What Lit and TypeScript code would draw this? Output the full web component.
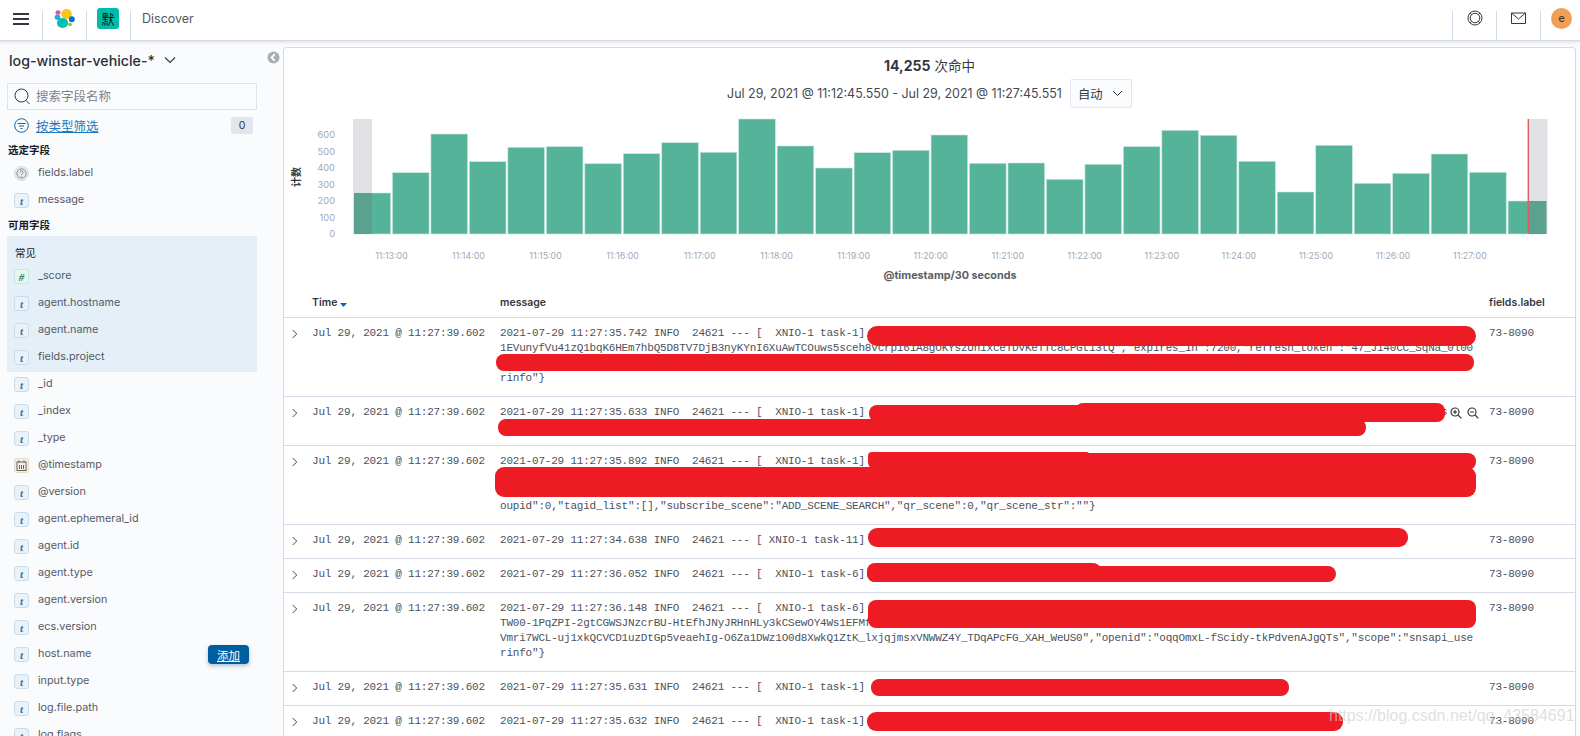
import { LitElement, html, css, svg } from "lit";
import { customElement } from "lit/decorators.js";

const BAR_TOPS = [193,172.7,134,161.7,147.3,146.7,163.7,153.7,142.7,152.3,119,146,168,152.7,150.3,135,163.3,163,179.3,164.3,146.7,130.3,135.3,161.3,192,145.3,183.3,173.3,154,172.3,201];
const YTICKS = [0,100,200,300,400,500,600];
const XLABELS = ["11:13:00","11:14:00","11:15:00","11:16:00","11:17:00","11:18:00","11:19:00","11:20:00","11:21:00","11:22:00","11:23:00","11:24:00","11:25:00","11:26:00","11:27:00"];

const POPULAR: [string,string][] = [["num","_score"],["t","agent.hostname"],["t","agent.name"],["t","fields.project"]];
const AVAILABLE: [string,string][] = [["t","_id"],["t","_index"],["t","_type"],["date","@timestamp"],["t","@version"],["t","agent.ephemeral_id"],["t","agent.id"],["t","agent.type"],["t","agent.version"],["t","ecs.version"],["t","host.name"],["t","input.type"],["t","log.file.path"],["t","log.flags"]];

const ROWS: string[][] = [
  ["2021-07-29 11:27:35.742 INFO  24621 --- [  XNIO-1 task-1]",
   '1EVunyfVu41zQ1bqK6HEm7hbQ5D8TV7DjB3nyKYnI6XuAwTCOuws5sceh8vcrp161A8gOKYszUn1xceTDvKeTTc8CPGt13tQ","expires_in":7200,"refresh_token":"47_J140CC_SqNa_0l00',
   "", 'rinfo"}'],
  ["2021-07-29 11:27:35.633 INFO  24621 --- [  XNIO-1 task-1]" + " ".repeat(90) + "s", ""],
  ["2021-07-29 11:27:35.892 INFO  24621 --- [  XNIO-1 task-1]", "", "",
   'oupid":0,"tagid_list":[],"subscribe_scene":"ADD_SCENE_SEARCH","qr_scene":0,"qr_scene_str":""}'],
  ["2021-07-29 11:27:34.638 INFO  24621 --- [ XNIO-1 task-11]"],
  ["2021-07-29 11:27:36.052 INFO  24621 --- [  XNIO-1 task-6]"],
  ["2021-07-29 11:27:36.148 INFO  24621 --- [  XNIO-1 task-6]",
   "TW00-1PqZPI-2gtCGWSJNzcrBU-HtEfhJNyJRHnHLy3kCSewOY4Ws1EFMf",
   'Vmri7WCL-uj1xkQCVCD1uzDtGp5veaehIg-O6Za1DWz1O0d8XwkQ1ZtK_lxjqjmsxVNWWZ4Y_TDqAPcFG_XAH_WeUS0","openid":"oqqOmxL-fScidy-tkPdvenAJgQTs","scope":"snsapi_use',
   'rinfo"}'],
  ["2021-07-29 11:27:35.631 INFO  24621 --- [  XNIO-1 task-1]"],
  ["2021-07-29 11:27:35.632 INFO  24621 --- [  XNIO-1 task-1]"],
];

// Redaction strokes painted over the log table: left, top, right, bottom, radius
const BLOBS: number[][] = [
  [867,326,1476,346,10],[496,354,1474,371,8],
  [869,405,1445,422,8],[1075,403,1445,420,8],[498,419,1366,436,8],
  [868,453,1476,470,8],[868,452,1090,462,4],[495,467,1476,497,9],
  [868,528,1408,547,9],
  [867,566,1336,582,8],[867,563,1101,582,8],
  [868,600,1476,628,8],
  [871,679,1289,696,8],
  [867,712,1343,731,9],
];

@customElement("app-root")
export class AppRoot extends LitElement {
  static styles = css`
    :host { display: block; width: 1580px; height: 736px; overflow: hidden; position: relative; background: #fafbfd;
      font-family: Inter, "Noto Sans CJK SC", sans-serif; color: #343741; }
    * { box-sizing: border-box; }
    .header { height: 41px; background: #fff; border-bottom: 1px solid #d3dae6; box-shadow: 0 1px 3px rgba(152,162,179,.35);
      display: flex; position: relative; z-index: 2; }
    .cell { height: 40px; display: flex; align-items: center; justify-content: center; position: relative; }
    .cell.sep::after { content: ""; position: absolute; right: 0; top: 11px; bottom: 0; width: 1px; background: #d3dae6; }
    .c1 { width: 43px; } .c2 { width: 44px; } .c3 { width: 44px; }
    .c1 svg { margin-right: 1px; margin-top: -3px; }
    .c2 svg { margin-top: -3px; }
    .badge { width: 22px; height: 21px; border-radius: 3px; background: #00bbaa; color: #111; font-size: 13px;
      display: flex; align-items: center; justify-content: center; margin-top: -4px; margin-left: -2px; }
    .crumb { margin-left: 11px; font-size: 12.5px; color: #54575f; line-height: 37px; flex: 1; }
    .rsep { width: 1px; height: 29px; margin-top: 11px; background: #d3dae6; }
    .r { width: 43px; height: 40px; display: flex; align-items: center; justify-content: center; padding-bottom: 4px; }
    .r.av { width: 39px; padding-left: 2px; }
    .avatar { width: 21px; height: 21px; border-radius: 50%; background: #f19f58; font-size: 10.5px; display: flex; align-items: center; justify-content: center; color: #222; }

    .main { display: flex; height: 695px; }
    .side { width: 283px; flex: none; padding: 0 26px 0 7px; position: relative; overflow: hidden; }
    .collapse { position: absolute; left: 267px; top: 10px; }
    .index { height: 40px; display: flex; align-items: center; margin-left: 2px; padding-bottom: 2px; font-size: 14.2px; font-weight: 500; color: #2c2f38; gap: 9px; }
    .search { height: 27px; margin-top: 2px; border: 1px solid #dfe4ec; background: #fbfcfd; display: flex; align-items: center;
      padding-left: 6px; gap: 5px; font-size: 12.5px; line-height: 23px; color: #7e838d; }
    .filter { height: 17px; margin-top: 7px; display: flex; align-items: center; padding-left: 7px; padding-right: 4px; }
    .filter .lbl { margin-left: 7px; font-size: 12.5px; color: #1a78bb; text-decoration: underline; flex: 1; }
    .count { width: 22px; height: 17px; background: #e0e5ee; border-radius: 3px; font-size: 10.5px; display: flex; align-items: center; justify-content: center; }
    .title { height: 16px; line-height: 16px; font-size: 10.5px; font-weight: 700; color: #1a1c21; margin-left: 1px; }
    .t1 { margin-top: 9px; }
    .t2 { margin-top: 5px; }
    .pop { margin-top: 2px; background: #e4eff8; padding-top: 10px; padding-bottom: 2px; margin-bottom: -2px; }
    .pop .title { margin: 0 0 0 8px; font-weight: 400; color: #1a1c21; }
    .f { height: 27px; display: flex; align-items: center; padding-left: 7px; font-size: 10.8px; color: #555a66; position: relative; }
    .ico { width: 15px; height: 15px; border-radius: 3px; display: flex; align-items: center; justify-content: center; margin-right: 9px; flex: none; margin-top: 2px;
      font-family: "Liberation Serif", serif; font-style: italic; font-weight: 700; font-size: 11px; }
    .ico.t { background: #eaf2f9; border: 1px solid #c9dcec; color: #3f6f97; }
    .ico.num { background: #e6f5f0; border: 1px solid #c9e8dd; color: #2f7d66; }
    .ico.date { background: #f3f0e9; border: 1px solid #e3dccd; }
    .ico.q { background: #e9ebef; border: 1px solid #d3d7dd; border-radius: 50%; }
    .add { position: absolute; left: 201px; top: 5px; width: 41px; height: 19px; border-radius: 4px; background: #005ea0; color: #fff;
      font-size: 11.5px; text-decoration: underline; display: flex; align-items: center; justify-content: center; box-shadow: 0 2px 4px rgba(0,60,110,.3); }

    .panel { width: 1293px; flex: none; margin-top: 6px; background: #fff; border: 1px solid #d3dae6; border-radius: 4px 4px 0 0; border-bottom: 0; overflow: hidden; }
    .hits { margin-top: 10px; height: 16px; line-height: 16px; text-align: center; font-size: 13.5px; color: #343741; }
    .hits b { font-weight: 700; font-size: 14px; margin-right: 4px; }
    .range { margin-top: 5px; height: 29px; display: flex; align-items: center; justify-content: center; gap: 8px; font-size: 12.45px; color: #454952; }
    .select { width: 62px; height: 29px; border: 1px solid #e3e8f0; background: #fbfcfd; border-radius: 2px; display: flex; align-items: center; padding-left: 7px; gap: 9px; font-size: 12.3px; color: #343741; }
    .chart { display: block; width: 1291px; height: 180px; font-family: Inter, "Noto Sans CJK SC", sans-serif; }
    .thead { height: 30px; display: grid; grid-template-columns: 28px 188px 989px 1fr; align-items: center; border-bottom: 1px solid #d3dae6; font-size: 10.5px; font-weight: 600; color: #343741; padding-bottom: 1px; }
    .sort { display: inline-block; margin-left: 3px; vertical-align: -1px; }
    .row { display: grid; grid-template-columns: 28px 188px 989px 1fr; border-bottom: 1px solid #d3dae6; padding: 8px 0 10px;
      font-family: "Liberation Mono", monospace; font-size: 11px; letter-spacing: -0.2px; line-height: 15px; color: #4d515b; }
    .chev { padding: 3px 0 0 8px; line-height: 0; }
    .msg { position: relative; }
    .line { height: 15px; white-space: pre; overflow: hidden; }
    .tools { position: absolute; right: 10px; top: 2px; display: flex; gap: 5px; }
    .blob { position: absolute; background: #ed1c24; z-index: 3; }
    .mark { position: absolute; left: 1329px; top: 707px; z-index: 4; font-family: "Liberation Sans", sans-serif; font-size: 16px; color: rgba(205,205,205,.65); white-space: nowrap; }
  `;

  private typeIcon(k: string) {
    if (k === "num") return html`<span class="ico num">#</span>`;
    if (k === "date") return html`<span class="ico date"><svg width="11" height="11" viewBox="0 0 11 11" fill="none" stroke="#6b6353"><rect x="1" y="2" width="9" height="8.5"/><path d="M3 .5v2M8 .5v2M3.5 5v4M5.5 5v4M7.5 5v4"/></svg></span>`;
    if (k === "q") return html`<span class="ico q"><svg width="11" height="11" viewBox="0 0 11 11" fill="none" stroke="#6d717a" stroke-width=".8"><circle cx="5.5" cy="5.5" r="4.6"/><path d="M3.9 4.4a1.6 1.5 0 1 1 2.5 1.2c-.6.4-.9.6-.9 1.3M5.5 7.8v.9"/></svg></span>`;
    return html`<span class="ico t">t</span>`;
  }

  private field(k: string, name: string) {
    return html`<div class="f">${this.typeIcon(k)}<span>${name}</span>${name === "host.name" ? html`<span class="add">添加</span>` : ""}</div>`;
  }

  private chart() {
    const pitch = 38.47, x0 = 354, base = 234;
    return svg`
      <svg class="chart" viewBox="284 108 1291 180">
        <rect x="353" y="119" width="19" height="115" fill="#e0e1e5"/>
        <rect x="1528" y="119" width="19.5" height="115" fill="#e0e1e5"/>
        ${BAR_TOPS.map((t, i) => svg`<rect x=${x0 + i * pitch} y=${t} width="36.6" height=${base - t} fill="#54b399" stroke="#c4e6dc" stroke-width=".6"/>`)}
        <rect x="354" y="193" width="18" height="41" fill="#5aa18f"/>
        <rect x="1528" y="201" width="18.5" height="33" fill="#5aa18f"/>
        <rect x="1527.6" y="119" width="1.4" height="115" fill="#d9605c"/>
        ${YTICKS.map((v) => svg`<text x="335" y=${233.7 - v * 0.1642 + 3.3} text-anchor="end" font-size="9.3" fill="#a3a9b5">${v}</text>`)}
        <text transform="translate(300 177) rotate(-90)" text-anchor="middle" font-size="10" font-weight="700" fill="#343741">计数</text>
        ${XLABELS.map((l, i) => svg`<text x=${391.5 + i * 77.03} y="259" text-anchor="middle" font-size="8.9" fill="#a3a9b5">${l}</text>`)}
        <text x="950" y="279" text-anchor="middle" font-size="10.8" font-weight="700" fill="#5a5e68">@timestamp/30 seconds</text>
      </svg>`;
  }

  render() {
    return html`
      <div class="header">
        <div class="cell sep c1"><svg width="16" height="12" viewBox="0 0 16 12" fill="#343741"><rect width="16" height="2"/><rect y="5" width="16" height="2"/><rect y="10" width="16" height="2"/></svg></div>
        <div class="cell sep c2">
          <svg width="22" height="21" viewBox="0 0 22 21">
            <ellipse cx="12.5" cy="6" rx="5.3" ry="5" fill="#fec514"/>
            <ellipse cx="8.5" cy="15" rx="5.6" ry="5" fill="#00bfb3"/>
            <ellipse cx="4" cy="4.5" rx="2.6" ry="2.2" fill="#f04e98"/>
            <ellipse cx="3.5" cy="9.2" rx="2.8" ry="2.6" fill="#1ba9f5"/>
            <ellipse cx="17.8" cy="11.3" rx="3" ry="3" fill="#0077cc"/>
            <ellipse cx="16" cy="16.5" rx="1.9" ry="1.8" fill="#93c90e"/>
          </svg>
        </div>
        <div class="cell sep c3"><span class="badge">默</span></div>
        <div class="crumb">Discover</div>
        <div class="rsep"></div>
        <div class="r"><svg width="16" height="16" viewBox="0 0 16 16" fill="none" stroke="#343741"><circle cx="8" cy="8" r="7"/><circle cx="8" cy="8" r="4.8"/><path d="M3 3l1.7 1.7M13 3l-1.7 1.7M3 13l1.7-1.7M13 13l-1.7-1.7"/></svg></div>
        <div class="rsep"></div>
        <div class="r"><svg width="15" height="12" viewBox="0 0 15 12" fill="none" stroke="#343741"><path d="M.5 1h14v10.5H.5z"/><path d="M.5 1l7 6 7-6"/></svg></div>
        <div class="rsep"></div>
        <div class="r av"><span class="avatar">e</span></div>
      </div>
      <div class="main">
        <div class="side">
          <svg class="collapse" width="13" height="13" viewBox="0 0 13 13"><circle cx="6.5" cy="6.5" r="6" fill="#a9adb4"/><path d="M7.8 3.2L4.6 6.5l3.2 3.3" fill="none" stroke="#fff" stroke-width="1.8"/></svg>
          <div class="index"><span>log-winstar-vehicle-*</span><svg width="12" height="8" viewBox="0 0 12 8" fill="none" stroke="#343741" stroke-width="1.1"><path d="M1 1.5l5 5 5-5"/></svg></div>
          <div class="search"><svg width="17" height="17" viewBox="0 0 17 17" fill="none" stroke="#343741" stroke-width="1"><circle cx="7.5" cy="7.5" r="6.5"/><path d="M12 12.5l3.5 3.5"/></svg><span>搜索字段名称</span></div>
          <div class="filter"><svg width="15" height="15" viewBox="0 0 15 15" fill="none" stroke="#006bb4"><circle cx="7.5" cy="7.5" r="6.8"/><path d="M3.5 5.5h8M5 8h5M6.5 10.5h2"/></svg><span class="lbl">按类型筛选</span><span class="count">0</span></div>
          <div class="title t1">选定字段</div>
          ${this.field("q", "fields.label")}
          ${this.field("t", "message")}
          <div class="title t2">可用字段</div>
          <div class="pop">
            <div class="title">常见</div>
            ${POPULAR.map(([k, n]) => this.field(k, n))}
          </div>
          ${AVAILABLE.map(([k, n]) => this.field(k, n))}
        </div>
        <div class="panel">
          <div class="hits"><b>14,255</b>次命中</div>
          <div class="range">
            <span>Jul 29, 2021 @ 11:12:45.550 - Jul 29, 2021 @ 11:27:45.551</span>
            <span class="select">自动<svg width="11" height="7" viewBox="0 0 11 7" fill="none" stroke="#343741"><path d="M1 1l4.5 4.5L10 1"/></svg></span>
          </div>
          ${this.chart()}
          <div class="thead">
            <span></span>
            <span>Time<svg class="sort" width="7" height="5" viewBox="0 0 7 5" fill="#006bb4"><path d="M0 1h7L3.5 5z"/></svg></span>
            <span>message</span>
            <span>fields.label</span>
          </div>
          ${ROWS.map((lines, i) => html`
            <div class="row">
              <div class="chev"><svg width="6" height="10" viewBox="0 0 6 10" fill="none" stroke="#454952"><path d="M.7 1l4 4-4 4"/></svg></div>
              <div>Jul 29, 2021 @ 11:27:39.602</div>
              <div class="msg">
                ${lines.map((l) => html`<div class="line">${l}</div>`)}
                ${i === 1 ? html`<div class="tools">${[0, 1].map((z) => html`<svg width="12" height="12" viewBox="0 0 12 12" fill="none" stroke="#343741" stroke-width="1.2"><circle cx="5" cy="5" r="4"/><path d="M8 8l3.4 3.4M3 5h4${z === 0 ? "M5 3v4" : ""}"/></svg>`)}</div>` : ""}
              </div>
              <div>73-8090</div>
            </div>`)}
        </div>
      </div>
      ${BLOBS.map(([l, t, r, b, rad]) => html`<div class="blob" style="left:${l}px;top:${t}px;width:${r - l}px;height:${b - t}px;border-radius:${rad}px"></div>`)}
      <div class="mark">https://blog.csdn.net/qq_43584691</div>
    `;
  }
}
